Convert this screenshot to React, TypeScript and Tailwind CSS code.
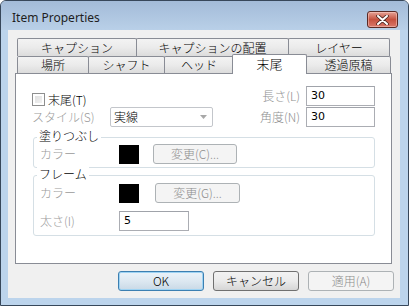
import * as React from 'react';

const JP = 'font-["Noto_Sans_CJK_JP",sans-serif] font-light';

function Tab({ label, w, first, selected }: { label: string; w: string; first?: boolean; selected?: boolean }) {
  if (selected) {
    return (
      <div
        className={`relative z-10 -ml-[2px] -mt-[2px] flex h-[20px] ${w} items-start justify-center rounded-t-[2px] border border-b-0 border-[#898c95] bg-white pt-[2px] text-[13px] leading-[14px] text-black`}
      >
        {label}
      </div>
    );
  }
  return (
    <div
      className={`flex h-full ${w} ${first ? '' : '-ml-px'} items-center justify-center rounded-t-[2px] border border-b-0 border-[#898c95] bg-gradient-to-b from-[#f3f3f3] via-[#ebebeb] to-[#dcdcdc] text-[12px] leading-[14px] text-black`}
    >
      {label}
    </div>
  );
}

function TextBox({ value, w }: { value: string; w: string }) {
  return (
    <div className={`flex h-[20px] ${w} items-center border border-[#abadb3] border-t-[#a0a3aa] bg-white pl-[4px] font-["DejaVu_Sans",sans-serif] text-[11px] font-normal text-black`}>
      {value}
    </div>
  );
}

function Btn({ label, w, kind }: { label: string; w: string; kind: 'default' | 'normal' | 'disabled' }) {
  const look =
    kind === 'disabled'
      ? 'border-[#adb2b5] bg-[#f4f4f4] text-[#8d8d8d]'
      : kind === 'default'
        ? 'border-[#3c7fb1] bg-gradient-to-b from-[#eaf3fa] via-[#dde8f1] to-[#c9d9e6] text-black shadow-[inset_0_0_0_1px_#9ed3f3]'
        : 'border-[#707070] bg-gradient-to-b from-[#f2f2f2] via-[#ebebeb] to-[#d6d6d6] text-black';
  return (
    <div className={`flex h-[20px] ${w} items-center justify-center rounded-[3px] border ${look} text-[12px] leading-[14px]`}>
      {label}
    </div>
  );
}

function GroupBox({ legend, children, h }: { legend: string; children: React.ReactNode; h: string }) {
  return (
    <div className={`relative ml-[1px] ${h} w-[342px] rounded-[3px] border border-[#d5dfe5]`}>
      <span className="absolute -top-[9px] left-[3px] bg-white px-[2px] text-[12px] leading-[14px] text-black">{legend}</span>
      {children}
    </div>
  );
}

export default function App() {
  return (
    <div className={`flex h-[306px] w-[409px] flex-col overflow-hidden rounded-t-[6px] border border-[#37475a] bg-[#bcd4ec] ${JP}`}>
      {/* title bar */}
      <div className="flex h-[29px] flex-none items-start justify-between bg-gradient-to-b from-[#a3bbd8] to-[#b9d0e8] pl-[11px] pr-[10px] pt-[10px]">
        <span className='font-["Noto_Sans","Segoe_UI",sans-serif] text-[12px] font-normal leading-[14px] text-[#1e1e1e]'>Item Properties</span>
        <div className="flex h-[17px] w-[31px] items-center justify-center rounded-[3px] border border-[#5a2a25] bg-gradient-to-b from-[#e4a196] via-[#c5513f] to-[#d9786b] shadow-[inset_0_0_0_1px_rgba(255,220,210,0.45)]">
          <svg width="13" height="10" viewBox="0 0 13 10">
            <path d="M2 1 L11 9 M11 1 L2 9" stroke="#4a2520" strokeWidth="3.6" strokeLinecap="round" />
            <path d="M2 1 L11 9 M11 1 L2 9" stroke="#ffffff" strokeWidth="2" strokeLinecap="round" />
          </svg>
        </div>
      </div>

      {/* client area */}
      <div className="mx-[7px] flex h-[268px] w-[392px] flex-none flex-col bg-[#f0f0f0] pt-[8px]">
        {/* back row of tabs */}
        <div className="ml-[9px] flex h-[18px]">
          <Tab label="キャプション" w="w-[120px]" first />
          <Tab label="キャプションの配置" w="w-[153px]" />
          <Tab label="レイヤー" w="w-[102px]" />
        </div>
        {/* front row of tabs */}
        <div className="ml-[9px] flex h-[17px] items-start">
          <Tab label="場所" w="w-[72px]" first />
          <Tab label="シャフト" w="w-[77px]" />
          <Tab label="ヘッド" w="w-[70px]" />
          <Tab label="末尾" w="w-[75px]" selected />
          <Tab label="透過原稿" w="w-[85px]" />
        </div>

        {/* tab page */}
        <div className="ml-[7px] h-[191px] w-[377px] border border-[#898c95] bg-white pl-[16px] pt-[12px]">
          <div className="flex h-[41px] justify-between pr-[16px]">
            <div className="flex flex-col">
              <div className="mt-[7px] flex h-[13px] items-center gap-[3px]">
                <div className="h-[13px] w-[13px] border border-[#8e8f8f] bg-gradient-to-br from-[#dcdcdc] to-[#f6f6f6] shadow-[inset_0_0_0_2px_#ffffff]" />
                <span className="text-[12px] leading-[14px] text-black">末尾(T)</span>
              </div>
              <div className="mt-[1px] flex h-[20px] items-center">
                <span className="w-[78px] text-[12px] leading-[14px] text-[#9a9a9a]">スタイル(S)</span>
                <div className="flex h-[20px] w-[103px] items-center justify-between rounded-[2px] border border-[#c3c6cb] bg-white pl-[3px] pr-[5px]">
                  <span className="text-[12px] leading-[14px] text-black">実線</span>
                  <svg width="7" height="4" viewBox="0 0 7 4">
                    <path d="M0 0 H7 L3.5 4 Z" fill="#a8a8a8" />
                  </svg>
                </div>
              </div>
            </div>
            <div className="flex flex-col gap-[1px]">
              <div className="flex items-center justify-end gap-[6px]">
                <span className="text-[12px] leading-[14px] text-[#8e8f8f]">長さ(L)</span>
                <TextBox value="30" w="w-[69px]" />
              </div>
              <div className="flex items-center justify-end gap-[6px]">
                <span className="text-[12px] leading-[14px] text-[#8e8f8f]">角度(N)</span>
                <TextBox value="30" w="w-[69px]" />
              </div>
            </div>
          </div>

          <div className="mt-[10px]">
            <GroupBox legend="塗りつぶし" h="h-[31px]">
              <div className="flex items-center pl-[6px] pt-[6px]">
                <span className="w-[79px] text-[12px] leading-[14px] text-[#9a9a9a]">カラー</span>
                <div className="h-[19px] w-[20px] bg-black" />
                <div className="ml-[14px]">
                  <Btn label="変更(C)..." w="w-[84px]" kind="disabled" />
                </div>
              </div>
            </GroupBox>
          </div>

          <div className="mt-[7px]">
            <GroupBox legend="フレーム" h="h-[61px]">
              <div className="flex flex-col pl-[6px] pt-[7px]">
                <div className="flex items-center">
                  <span className="w-[79px] text-[12px] leading-[14px] text-[#9a9a9a]">カラー</span>
                  <div className="h-[19px] w-[20px] bg-black" />
                  <div className="ml-[16px]">
                    <Btn label="変更(G)..." w="w-[85px]" kind="disabled" />
                  </div>
                </div>
                <div className="mt-[8px] flex items-center">
                  <span className="w-[79px] text-[12px] leading-[14px] text-[#9a9a9a]">太さ(I)</span>
                  <TextBox value="5" w="w-[70px]" />
                </div>
              </div>
            </GroupBox>
          </div>
        </div>

        {/* dialog buttons */}
        <div className="mt-[7px] flex justify-end gap-[9px] pr-[6px]">
          <Btn label="OK" w="w-[86px]" kind="default" />
          <Btn label="キャンセル" w="w-[86px]" kind="normal" />
          <Btn label="適用(A)" w="w-[86px]" kind="disabled" />
        </div>
      </div>
    </div>
  );
}
